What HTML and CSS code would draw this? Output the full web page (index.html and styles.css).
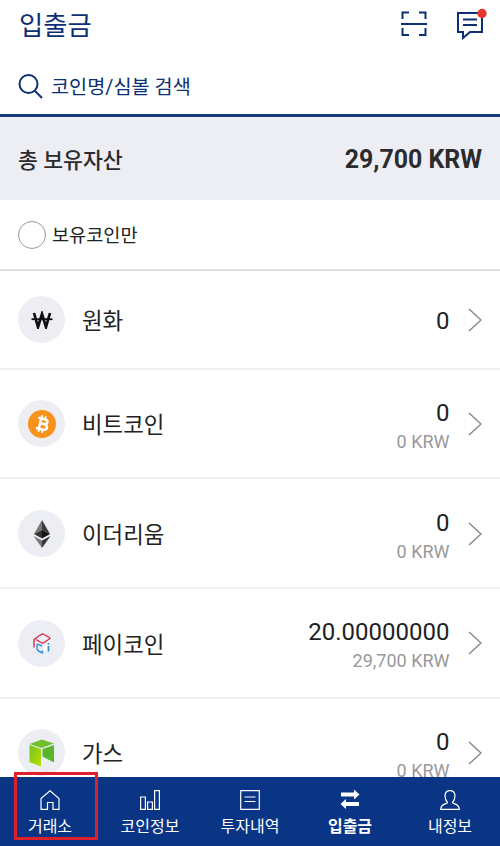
FILE: index.html
```
<!DOCTYPE html>
<html lang="ko">
<head>
    <meta charset="UTF-8">
    <meta name="viewport" content="width=device-width, initial-scale=1">
    <title>입출금</title>
    <link rel="stylesheet" href="styles.css">
</head>
<body>
    <div class="app">
        <header class="header">
            <h1>입출금</h1>
            <div class="header-icons">
                <svg width="26" height="26" viewBox="0 0 26 26" fill="none" stroke="#0d2f73" stroke-width="2">
                    <path d="M1.500 8V1.500H8M18 1.500H24.500V8M1.500 17V24H8M18 24H24.500V17M0 13H26"/>
                </svg>
                <svg width="31" height="32" viewBox="0 0 31 32">
                    <path d="M2 5H26V24H14L7 30V24H2Z" fill="none" stroke="#0d2f73" stroke-width="2"/>
                    <path d="M7 11.500H21M7 17H21" stroke="#0d2f73" stroke-width="2"/>
                    <circle cx="26" cy="5.500" r="4.700" fill="#e5392f"/>
                </svg>
            </div>
        </header>

        <div class="search">
            <svg width="26" height="26" viewBox="0 0 26 26" fill="none" stroke="#0d2f73" stroke-width="2">
                <circle cx="10.500" cy="11" r="9"/>
                <path d="M16.500 17.500L24 25"/>
            </svg>
            <span>코인명/심볼 검색</span>
        </div>

        <div class="summary">
            <span class="summary-label">총 보유자산</span>
            <span class="summary-total">29,700 KRW</span>
        </div>

        <div class="filter">
            <span class="radio"></span>
            <span class="filter-label">보유코인만</span>
        </div>

        <ul class="coins">
            <li class="coin coin-krw">
                <div class="coin-icon">
                    <svg width="22" height="18" viewBox="0 0 22 18" fill="none" stroke="#111">
                        <path d="M3 2L7 16L11 3L15 16L19 2" stroke-width="2.700"/>
                        <path d="M.5 8.200H21.500" stroke-width="1.800"/>
                    </svg>
                </div>
                <span class="coin-name">원화</span>
                <div class="amount">
                    <span class="qty">0</span>
                </div>
                <svg class="arrow" viewBox="0 0 14 24"><path d="M1 1L13 12L1 23"/></svg>
            </li>
            <li class="coin">
                <div class="coin-icon">
                    <svg width="28" height="28" viewBox="0 0 28 28">
                        <circle cx="14" cy="14" r="14" fill="#f7931a"/>
                        <g transform="rotate(13 14 14)" fill="none" stroke="#fff">
                            <path d="M9 8.700H15.500C20 8.700 20 13.600 15.500 13.600H12M15.500 13.600C21 13.600 21 19.300 15.500 19.300H9M12 8.700V19.300" stroke-width="2.500"/>
                            <path d="M12.300 5.500V9M16 5.500V9M12.300 19V22.500M16 19V22.500" stroke-width="1.900"/>
                        </g>
                    </svg>
                </div>
                <span class="coin-name">비트코인</span>
                <div class="amount">
                    <span class="qty">0</span>
                    <span class="krw">0 KRW</span>
                </div>
                <svg class="arrow" viewBox="0 0 14 24"><path d="M1 1L13 12L1 23"/></svg>
            </li>
            <li class="coin">
                <div class="coin-icon">
                    <svg width="18" height="28" viewBox="0 0 18 28">
                        <path d="M9 0V10L1 14Z" fill="#777"/>
                        <path d="M9 0V10L17 14Z" fill="#3b3b3b"/>
                        <path d="M1 14L9 10V18.500Z" fill="#343434"/>
                        <path d="M17 14L9 10V18.500Z" fill="#141414"/>
                        <path d="M.5 16L9 20.500V28Z" fill="#777"/>
                        <path d="M17.500 16L9 20.500V28Z" fill="#383838"/>
                    </svg>
                </div>
                <span class="coin-name">이더리움</span>
                <div class="amount">
                    <span class="qty">0</span>
                    <span class="krw">0 KRW</span>
                </div>
                <svg class="arrow" viewBox="0 0 14 24"><path d="M1 1L13 12L1 23"/></svg>
            </li>
            <li class="coin">
                <div class="coin-icon">
                    <svg width="18" height="21" viewBox="0 0 18 21" fill="none" stroke-width="1.400" stroke-linejoin="round">
                        <path d="M10.500 13V19L13.500 17.500V12Z" fill="#fff"/>
                        <path d="M1 14.500V6.500L8 1.500Q9.500.5 11 1.500L16.300 4.500Q17.500 5.300 16.300 6L11 9.500Q9.500 10.500 8 9.500L3 6.500" stroke="#d62f45"/>
                        <path d="M9 13L5.500 11.300Q4 10.800 4 12.500V15.500Q4 17 5.500 18L9.500 20V17.500" stroke="#2f8fd8"/>
                        <path d="M15.500 13V18.500M15.500 10V11.500" stroke="#2f8fd8" stroke-width="1.600"/>
                    </svg>
                </div>
                <span class="coin-name">페이코인</span>
                <div class="amount">
                    <span class="qty">20.00000000</span>
                    <span class="krw">29,700 KRW</span>
                </div>
                <svg class="arrow" viewBox="0 0 14 24"><path d="M1 1L13 12L1 23"/></svg>
            </li>
            <li class="coin">
                <div class="coin-icon">
                    <svg width="26" height="28" viewBox="0 0 26 28">
                        <defs>
                            <linearGradient id="gas" x1="0" y1="0" x2="1" y2="1">
                                <stop offset="0" stop-color="#76bd22"/>
                                <stop offset="1" stop-color="#b4e600"/>
                            </linearGradient>
                        </defs>
                        <path d="M.5 5L13 .5L25 4.500L12.500 9Z" fill="#70bf2c"/>
                        <path d="M.5 6L12 10V27.500L.5 23Z" fill="url(#gas)"/>
                        <path d="M13.500 10L25 6V23.500L13.500 17.500Z" fill="#59b52b"/>
                    </svg>
                </div>
                <span class="coin-name">가스</span>
                <div class="amount">
                    <span class="qty">0</span>
                    <span class="krw">0 KRW</span>
                </div>
                <svg class="arrow" viewBox="0 0 14 24"><path d="M1 1L13 12L1 23"/></svg>
            </li>
        </ul>

        <nav class="tabs">
            <a class="tab">
                <svg viewBox="0 0 20 20"><path d="M1 8.500L10 .8L19 8.500V19.300H13V12.500H7.500V19.300H1Z"/></svg>
                <span>거래소</span>
                <span class="highlight"></span>
            </a>
            <a class="tab">
                <svg viewBox="0 0 20 20"><path d="M.6 7H5.400V19.400H.6ZM7.600 12H12.400V19.400H7.600ZM14.600 .6H19.400V19.400H14.600Z"/></svg>
                <span>코인정보</span>
            </a>
            <a class="tab">
                <svg viewBox="0 0 20 20"><path d="M.7 .7H19.300V19.300H.7ZM4.500 7H15.500M4.500 11.500H15.500"/></svg>
                <span>투자내역</span>
            </a>
            <a class="tab active">
                <svg viewBox="0 0 20 20"><path class="solid" d="M1 2.500H14V-.5L19.500 4.500L14 9.500V6.500H1ZM19 12H6V9L.5 14L6 19V16H19Z"/></svg>
                <span>입출금</span>
            </a>
            <a class="tab">
                <svg viewBox="0 0 20 20"><path d="M7.500 12.500C5.500 10.500 5 7.500 5 5.500C5.300 2.500 7 .7 10 .7S14.700 2.500 15 5.500C15 7.500 14.500 10.500 12.500 12.500C12.500 14 19.300 13.500 19.300 19.300H.7C.7 13.500 7.500 14 7.500 12.500Z"/></svg>
                <span>내정보</span>
            </a>
        </nav>
    </div>
</body>
</html>
```
FILE: styles.css
```
* {
    box-sizing: border-box;
}

body {
    margin: 0;
    font-family: Roboto, "Noto Sans CJK KR", sans-serif;
    color: #222;
    background-color: #fff;
}

.app {
    display: flex;
    flex-direction: column;
    height: 846px;
    overflow: hidden;
}

.header {
    display: flex;
    justify-content: space-between;
    align-items: center;
    flex: none;
    height: 50px;
    padding: 0 13px 0 19px;
    color: #0d2f73;
}

h1 {
    margin: 0;
    padding-top: 2px;
    font-size: 26.3px;
    font-weight: 400;
    line-height: 48px;
}

.header-icons {
    display: flex;
    align-items: center;
    gap: 29px;
    padding-bottom: 2px;
}

.search {
    display: flex;
    align-items: center;
    gap: 7px;
    flex: none;
    height: 67px;
    padding: 7px 18px 0;
    border-bottom: 3px solid #173b7b;
    color: #0d2f73;
    font-size: 19.7px;
}

.summary {
    display: flex;
    justify-content: space-between;
    align-items: center;
    flex: none;
    height: 83px;
    padding: 2px 18px 0;
    background-color: #edeef4;
    color: #2b2b2e;
    font-weight: bold;
}

.summary-label {
    padding-bottom: 3px;
    font-size: 21.6px;
    font-weight: 500;
}

.summary-total {
    font-size: 24.9px;
}

.filter {
    display: flex;
    align-items: center;
    gap: 6px;
    flex: none;
    height: 71px;
    padding: 0 18px;
    border-bottom: 2px solid #e0e0e0;
    font-size: 18.6px;
    line-height: 26px;
}

.filter-label {
    padding-top: 3px;
}

.radio {
    width: 28px;
    height: 28px;
    border: 1.5px solid #999;
    border-radius: 50%;
}

.coins {
    flex: 1;
    min-height: 0;
    margin: 0;
    padding: 0;
    overflow: hidden;
    list-style: none;
}

.coin {
    display: flex;
    align-items: center;
    height: 109.7px;
    padding: 1px 18px 0;
    border-bottom: 2px solid #efefef;
}

.coin-krw {
    height: 98.5px;
}

.coin-icon {
    display: flex;
    justify-content: center;
    align-items: center;
    width: 47px;
    height: 47px;
    margin-right: 17px;
    border-radius: 50%;
    background-color: #edeef4;
}

.coin-name {
    padding-bottom: 1px;
    font-size: 22.4px;
}

.amount {
    display: flex;
    flex-direction: column;
    align-items: flex-end;
    margin-left: auto;
    margin-right: 18.5px;
    padding-top: 7px;
}

.coin-krw .amount {
    padding-top: 4px;
}

.qty {
    font-size: 24px;
    line-height: 29px;
}

.krw {
    color: #999;
    font-size: 18px;
    line-height: 28px;
}

.arrow {
    width: 14px;
    height: 24px;
    fill: none;
    stroke: #888;
    stroke-width: 1.4;
}

.tabs {
    display: flex;
    flex: none;
    height: 69px;
    background-color: #0a3585;
    color: #fff;
}

.tab {
    position: relative;
    display: flex;
    flex-direction: column;
    align-items: center;
    flex: 1;
    padding-top: 13px;
    font-size: 16px;
    line-height: 24px;
}

.tab svg {
    width: 20px;
    height: 20px;
    margin-bottom: 5px;
    fill: none;
    stroke: #fff;
    stroke-width: 1.2;
    overflow: visible;
}

.tab .solid {
    fill: #fff;
    stroke: none;
}

.active {
    font-weight: bold;
}

.highlight {
    position: absolute;
    top: -5px;
    left: 14px;
    width: 84px;
    height: 68px;
    border: 3px solid #e01f2d;
}
```
